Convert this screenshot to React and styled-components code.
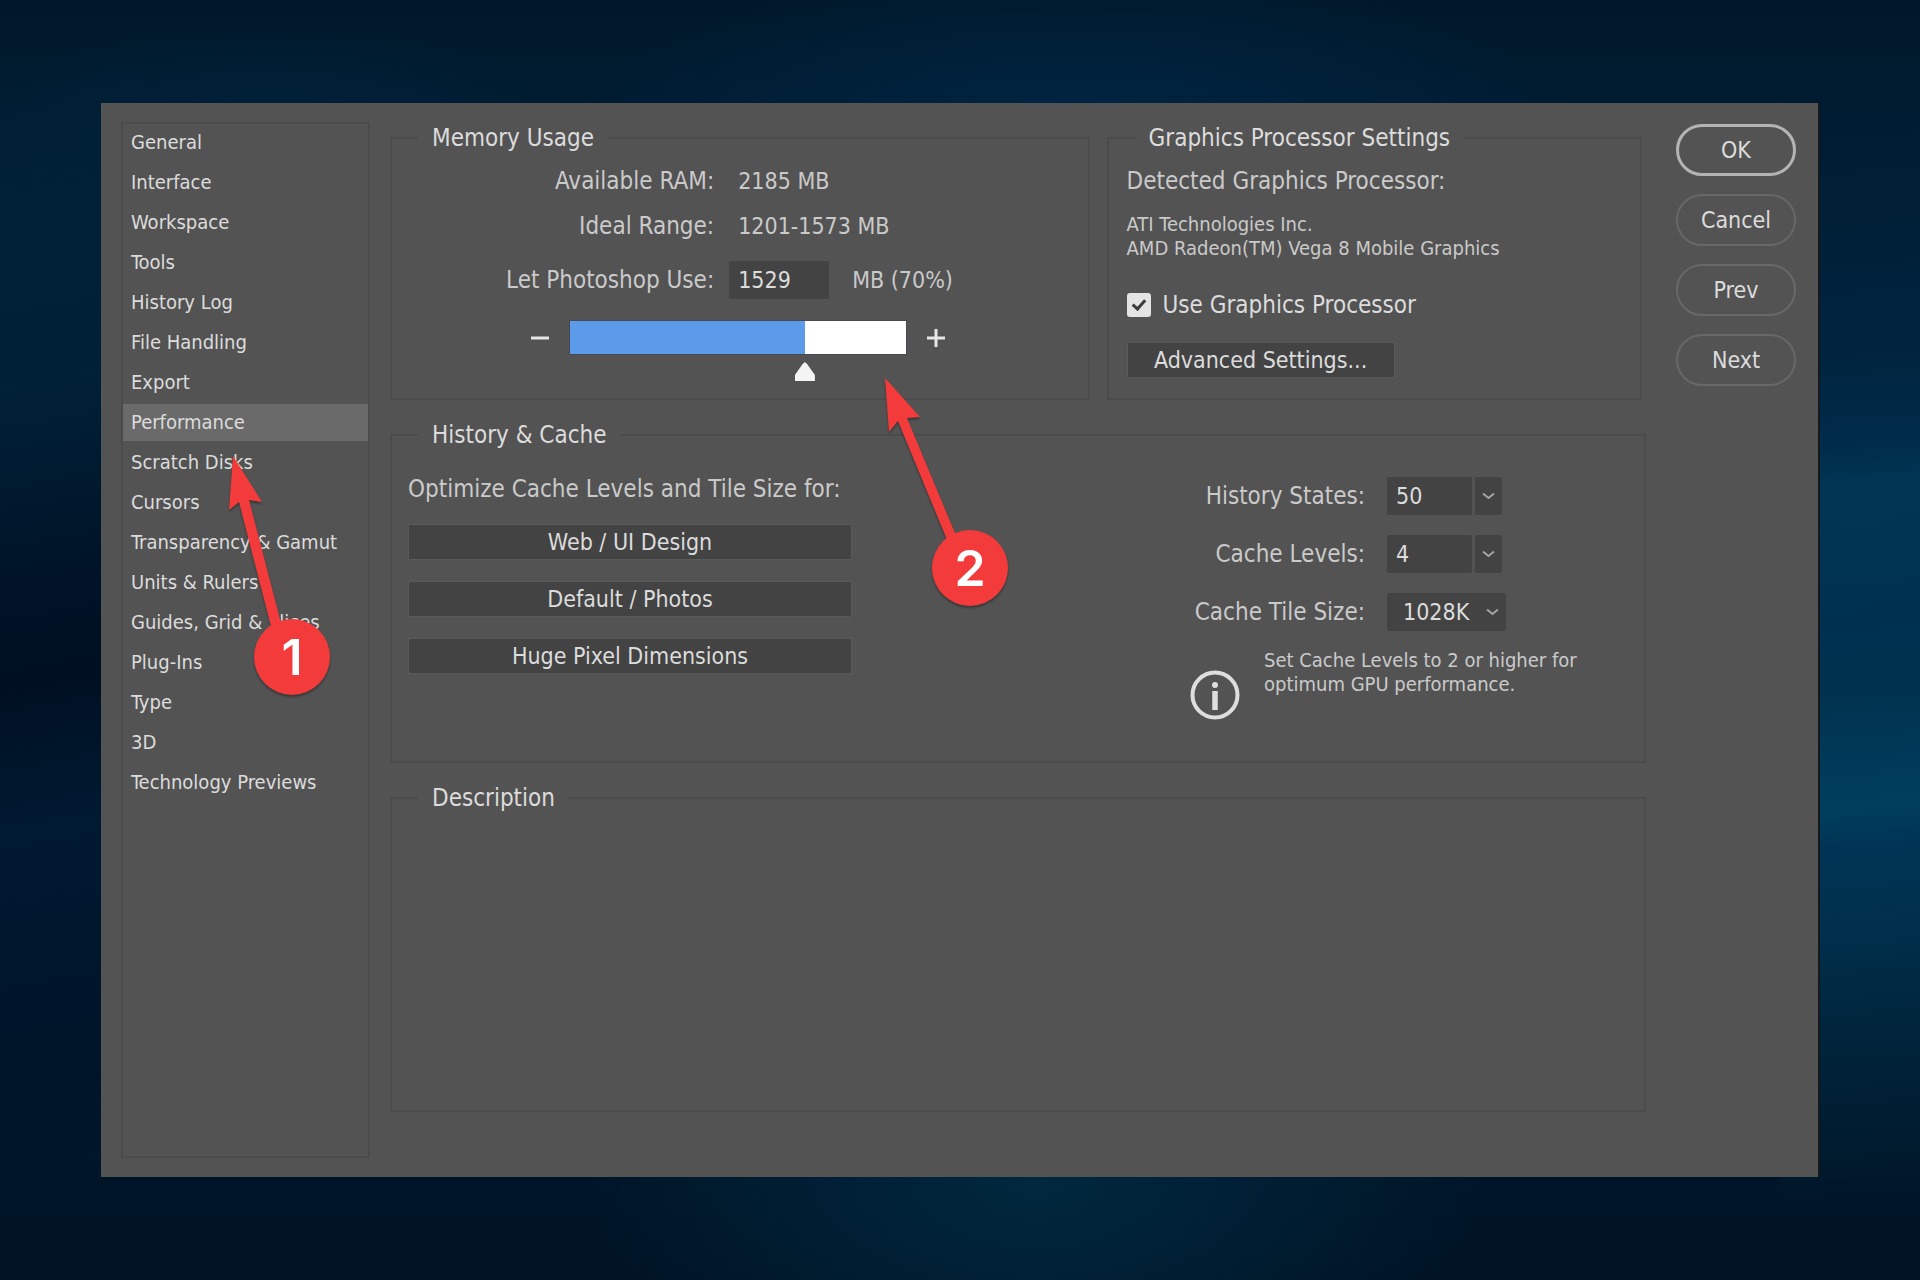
import React, { useState } from "react";
import styled, { createGlobalStyle } from "styled-components";

const color = {
  panel: "#535353",
  line: "#4b4b4b",
  field: "#434343",
  fieldEdge: "#5a5a5a",
  selected: "#6a6a6a",
  text: "#dcdcdc",
  muted: "#cacaca",
  red: "#f43b3b",
  blue: "#5b9bea",
};

const GlobalStyle = createGlobalStyle`
  *, *::before, *::after { box-sizing: border-box; }
  body { margin: 0; }
  body, button, input, select {
    font-family: "DejaVu Sans Condensed", "DejaVu Sans", sans-serif;
    font-size: 23px;
    line-height: 28px;
    color: ${color.text};
  }
`;

const Desktop = styled.div`
  min-height: 100vh;
  padding: 103px 102px 103px 101px;
  display: flex;
  background:
    linear-gradient(176deg, transparent 10%, #002440 28%, #002c4a 35%, #003654 38%, #003050 48%, #00324f 54%, #003e5e 63%, #003454 66%, #002f4c 73%, #002a44 76%, #001c30 88%, transparent 94%) right / 140px 100% no-repeat,
    linear-gradient(170deg, transparent 6%, #002138 16%, #002038 30%, #001226 46%, #001022 53%, #001a32 64%, #00142a 80%, transparent 92%) left / 140px 100% no-repeat,
    radial-gradient(500px 160px at 56% 10%, #002544 0%, transparent 100%),
    radial-gradient(450px 260px at 54% 92%, #00283f 0%, transparent 100%),
    radial-gradient(300px 90px at 14% 9%, #002138 0%, transparent 100%),
    linear-gradient(180deg, #00182a 0%, #001c32 10%, #001629 90%, #001324 100%);
`;

const Dialog = styled.main`
  position: relative;
  flex: 1;
  display: flex;
  padding: 19px 22px 19px 20px;
  background: ${color.panel};
  box-shadow: 2px 0 0 #15191c;
`;

const Sidebar = styled.nav`
  flex: 0 0 249px;
  margin-right: 20px;
  border: 2px solid ${color.line};
`;

const NavList = styled.ul`
  display: flex;
  flex-direction: column;
  gap: 3px;
  margin: 0;
  padding: 0;
  list-style: none;
`;

const NavLink = styled.a`
  display: block;
  padding: 0 8px;
  font-size: 20px;
  line-height: 37px;
  color: ${color.text};
  text-decoration: none;
  white-space: nowrap;
  background: ${(p) => (p.$selected ? color.selected : "transparent")};
`;

const Content = styled.div`
  flex: 1;
  min-width: 0;
  display: flex;
  flex-direction: column;
  gap: 21px;
  padding: 2px 0 46px;
`;

const TopRow = styled.div`
  display: grid;
  grid-template-columns: 699fr 535fr;
  gap: 17px;
  padding-right: 4px;
`;

const Group = styled.fieldset`
  min-width: 0;
  margin: 0;
  padding: 0 20px 0 16px;
  border: 2px solid ${color.line};
  flex: ${(p) => (p.$grow ? 1 : "none")};
`;

const Legend = styled.legend`
  margin-left: 10px;
  padding: 0 14px;
  font-size: 24px;
`;

const MemoryGrid = styled.div`
  display: grid;
  grid-template-columns: 19fr 21fr;
  grid-template-rows: 45px 45px 64px;
  column-gap: 15px;
  align-items: center;
  padding-top: 6px;
  font-size: 24px;
  color: ${color.muted};
`;

const FieldLabel = styled.label`
  font-size: 24px;
  text-align: right;
  white-space: nowrap;
  color: ${color.muted};
`;

const Caption = styled.span`
  text-align: right;
`;

const Value = styled.span`
  padding-left: 9px;
  font-size: 23px;
`;

const Amount = styled.div`
  display: flex;
  align-items: center;
  gap: 14px;
`;

const TextField = styled.input`
  width: ${(p) => p.$width};
  height: 38px;
  padding: 0 9px;
  border: 0;
  border-radius: 2px;
  background: ${color.field};
`;

const SliderRow = styled.div`
  display: flex;
  align-items: center;
  justify-content: center;
  gap: 20px;
  padding: 9px 0 42px;
`;

const StepButton = styled.button`
  display: flex;
  width: 20px;
  height: 20px;
  padding: 0;
  border: 0;
  background: none;
`;

const SliderTrack = styled.div`
  width: 336px;
  height: 33px;
  box-shadow: 0 0 0 1px #464a50;
`;

const Slider = styled.input`
  display: block;
  width: 356px;
  height: 33px;
  margin: 0 -10px;
  appearance: none;
  background: none;

  &::-webkit-slider-runnable-track {
    height: 33px;
    background: none;
  }

  &::-webkit-slider-thumb {
    appearance: none;
    width: 20px;
    height: 19px;
    margin-top: 41px;
    background: #f4f4f4;
    clip-path: polygon(50% 0, 62% 12%, 100% 68%, 100% 100%, 0 100%, 0 68%, 38% 12%);
  }
`;

const Processor = styled.div`
  display: flex;
  flex-direction: column;
  align-items: flex-start;
  padding: 15px 0 20px 2px;
`;

const Line = styled.p`
  margin: 0;
  font-size: 24px;
  white-space: nowrap;
  color: ${color.muted};
`;

const SmallText = styled.p`
  margin: ${(p) => p.$margin || 0};
  font-size: 20px;
  line-height: 24px;
  white-space: nowrap;
  color: ${color.muted};
`;

const CheckLabel = styled.label`
  display: flex;
  align-items: center;
  gap: 12px;
  margin-bottom: 23px;
  font-size: 24px;
`;

const CheckBox = styled.input`
  appearance: none;
  width: 24px;
  height: 24px;
  margin: 0;
  border-radius: 3px;
  background: #e4e4e4;
  display: grid;
  place-items: center;

  &:checked::before {
    content: "";
    width: 8px;
    height: 13px;
    margin-bottom: 4px;
    border: solid #3c3c3c;
    border-width: 0 3px 3px 0;
    transform: rotate(42deg);
  }
`;

const FlatButton = styled.button`
  width: ${(p) => p.$width};
  height: 36px;
  padding: 0;
  border: 1px solid ${color.fieldEdge};
  background: ${color.field};
  color: ${color.text};
`;

const HistoryBody = styled.div`
  display: flex;
  justify-content: space-between;
  padding: 26px 0 41px;
`;

const Presets = styled.div`
  display: flex;
  flex-direction: column;
  gap: 21px;
`;

const CacheSettings = styled.div`
  display: flex;
  flex-direction: column;
  gap: 17px;
  flex: 0 0 434px;
  padding-top: 2px;
`;

const SettingsGrid = styled.div`
  display: grid;
  grid-template-columns: 175px auto;
  grid-auto-rows: 38px;
  justify-content: start;
  align-items: center;
  gap: 20px 22px;
`;

const Combo = styled.div`
  display: flex;
  gap: 3px;
`;

const ComboButton = styled.button`
  display: grid;
  place-items: center;
  width: 27px;
  height: 38px;
  padding: 0;
  border: 0;
  border-radius: 2px;
  background: ${color.field};
`;

const SelectWrap = styled.div`
  display: grid;
  grid-template-columns: 1fr 20px;
  align-items: center;
  width: 119px;
  height: 38px;
  border-radius: 2px;
  background: ${color.field};
`;

const Select = styled.select`
  grid-area: 1 / 1 / 2 / 3;
  height: 38px;
  padding: 0 16px;
  border: 0;
  appearance: none;
  background: none;
`;

const ArrowSlot = styled.span`
  grid-area: 1 / 2;
  display: grid;
  place-items: center start;
  pointer-events: none;
`;

const Note = styled.div`
  display: flex;
  align-items: flex-end;
  gap: 24px;
`;

const Actions = styled.div`
  flex: 0 0 120px;
  display: flex;
  flex-direction: column;
  gap: 18px;
  margin-left: 30px;
  padding-top: 2px;
`;

const PillButton = styled.button`
  height: 52px;
  padding: 0;
  border: ${(p) => (p.$primary ? "3px solid #b4b4b4" : "2px solid #686868")};
  border-radius: 26px;
  background: none;
  color: ${color.text};
`;

const Callout = styled.div`
  position: absolute;
  left: ${(p) => p.$x}px;
  top: ${(p) => p.$y}px;
  width: 76px;
  height: 76px;
  pointer-events: none;
  filter: drop-shadow(0 2px 1px rgba(0, 0, 0, 0.35));
`;

const CalloutArrow = styled.svg`
  position: absolute;
  left: 38px;
  top: 38px;
  width: 1px;
  height: 1px;
  overflow: visible;
  fill: ${color.red};
`;

const Badge = styled.span`
  position: relative;
  display: grid;
  place-items: center;
  height: 76px;
  border-radius: 50%;
  background: ${color.red};
  color: #fff;
  font: 600 50px Inter, "Liberation Sans", sans-serif;
`;

const sections = [
  "General", "Interface", "Workspace", "Tools", "History Log", "File Handling", "Export",
  "Performance", "Scratch Disks", "Cursors", "Transparency & Gamut", "Units & Rulers",
  "Guides, Grid & Slices", "Plug-Ins", "Type", "3D", "Technology Previews",
];

const presets = ["Web / UI Design", "Default / Photos", "Huge Pixel Dimensions"];
const RAM = 2185;

const Chevron = () => (
  <svg width="13" height="8" viewBox="0 0 13 8" fill="none" stroke="#a4a4a4" strokeWidth="2" aria-hidden="true">
    <path d="M1 1.5l5.500 4.500 5.500-4.500" />
  </svg>
);

const StepIcon = ({ plus }) => (
  <svg width="20" height="20" viewBox="0 0 20 20" stroke="#e6e6e6" strokeWidth="3" aria-hidden="true">
    <path d={plus ? "M1 10h18M10 1v18" : "M1 10h18"} />
  </svg>
);

const InfoIcon = () => (
  <svg width="50" height="50" viewBox="0 0 50 50" fill="none" stroke="#dedede" aria-hidden="true">
    <circle cx="25" cy="25" r="22.500" strokeWidth="4" />
    <circle cx="25" cy="15" r="3" fill="#dedede" stroke="none" />
    <path d="M25 21v19" strokeWidth="5.500" />
  </svg>
);

const ComboField = ({ id, label, value }) => (
  <>
    <FieldLabel htmlFor={id}>{label}</FieldLabel>
    <Combo>
      <TextField id={id} $width="85px" defaultValue={value} />
      <ComboButton type="button" aria-label={`${label} options`}><Chevron /></ComboButton>
    </Combo>
  </>
);

export default function App() {
  const [used, setUsed] = useState(1529);
  const [section, setSection] = useState("Performance");
  const percent = Math.round((used / RAM) * 100);
  const change = (e) => setUsed(Number(e.target.value) || 0);

  return (
    <>
      <GlobalStyle />
      <Desktop>
        <Dialog>
          <Sidebar aria-label="Preferences">
            <NavList>
              {sections.map((name) => (
                <li key={name}>
                  <NavLink href="#" $selected={name === section} onClick={() => setSection(name)}>{name}</NavLink>
                </li>
              ))}
            </NavList>
          </Sidebar>

          <Content>
            <TopRow>
              <Group>
                <Legend>Memory Usage</Legend>
                <MemoryGrid>
                  <Caption>Available RAM:</Caption>
                  <Value>{RAM} MB</Value>
                  <Caption>Ideal Range:</Caption>
                  <Value>1201-1573 MB</Value>
                  <FieldLabel htmlFor="memory">Let Photoshop Use:</FieldLabel>
                  <Amount>
                    <TextField id="memory" $width="100px" value={used} onChange={change} />
                    <Value>MB ({percent}%)</Value>
                  </Amount>
                </MemoryGrid>
                <SliderRow>
                  <StepButton type="button" aria-label="Less memory" onClick={() => setUsed(used - 1)}><StepIcon /></StepButton>
                  <SliderTrack style={{ background: `linear-gradient(90deg, ${color.blue} ${percent}%, #fff ${percent}%)` }}>
                    <Slider type="range" aria-label="Memory used" min="0" max={RAM} value={used} onChange={change} />
                  </SliderTrack>
                  <StepButton type="button" aria-label="More memory" onClick={() => setUsed(used + 1)}><StepIcon plus /></StepButton>
                </SliderRow>
              </Group>

              <Group>
                <Legend>Graphics Processor Settings</Legend>
                <Processor>
                  <Line>Detected Graphics Processor:</Line>
                  <SmallText $margin="17px 0 31px">
                    ATI Technologies Inc.<br />AMD Radeon(TM) Vega 8 Mobile Graphics
                  </SmallText>
                  <CheckLabel>
                    <CheckBox type="checkbox" defaultChecked />
                    Use Graphics Processor
                  </CheckLabel>
                  <FlatButton type="button" $width="268px">Advanced Settings...</FlatButton>
                </Processor>
              </Group>
            </TopRow>

            <Group>
              <Legend>History &amp; Cache</Legend>
              <HistoryBody>
                <Presets>
                  <Line>Optimize Cache Levels and Tile Size for:</Line>
                  {presets.map((name) => <FlatButton type="button" key={name} $width="444px">{name}</FlatButton>)}
                </Presets>
                <CacheSettings>
                  <SettingsGrid>
                    <ComboField id="states" label="History States:" value="50" />
                    <ComboField id="levels" label="Cache Levels:" value="4" />
                    <FieldLabel htmlFor="tile">Cache Tile Size:</FieldLabel>
                    <SelectWrap>
                      <Select id="tile" defaultValue="1028K">
                        <option>128K</option>
                        <option>1028K</option>
                      </Select>
                      <ArrowSlot><Chevron /></ArrowSlot>
                    </SelectWrap>
                  </SettingsGrid>
                  <Note>
                    <InfoIcon />
                    <SmallText $margin="0 0 24px">
                      Set Cache Levels to 2 or higher for<br />optimum GPU performance.
                    </SmallText>
                  </Note>
                </CacheSettings>
              </HistoryBody>
            </Group>

            <Group $grow>
              <Legend>Description</Legend>
            </Group>
          </Content>

          <Actions>
            <PillButton type="button" $primary>OK</PillButton>
            <PillButton type="button">Cancel</PillButton>
            <PillButton type="button">Prev</PillButton>
            <PillButton type="button">Next</PillButton>
          </Actions>

          <Callout $x={153} $y={516}>
            <CalloutArrow aria-hidden="true">
              <path d="M-59-201L-30-155l-13-2L-10-30-20-27-53-155l-10 8z" />
            </CalloutArrow>
            <Badge>1</Badge>
          </Callout>
          <Callout $x={831} $y={427}>
            <CalloutArrow aria-hidden="true">
              <path d="M-85-190L-50-151l-13 1L-13-30-22-26-72-147l-9 11z" />
            </CalloutArrow>
            <Badge>2</Badge>
          </Callout>
        </Dialog>
      </Desktop>
    </>
  );
}
